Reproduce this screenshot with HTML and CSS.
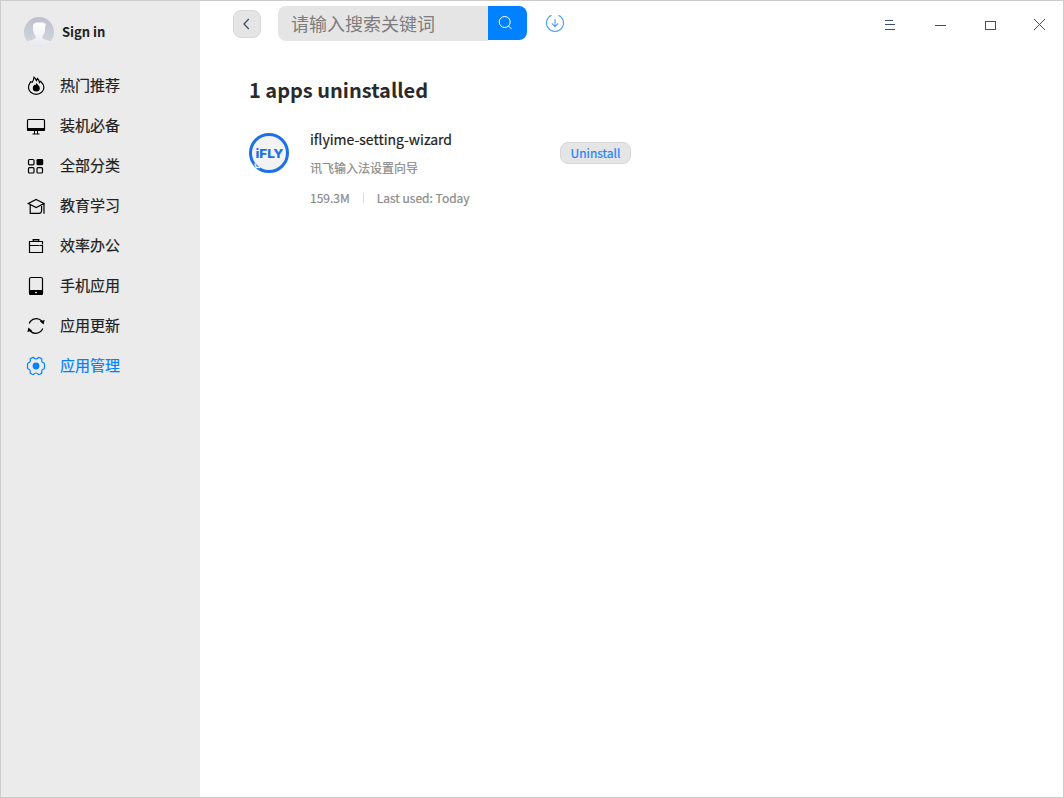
FILE: index.html
```html
<!DOCTYPE html>
<html lang="zh-CN">
<head>
<meta charset="utf-8">
<title>App Store</title>
<link rel="stylesheet" href="styles.css">
</head>
<body>
<div class="window">
  <aside class="sidebar">
    <div class="account">
      <svg class="avatar" viewBox="0 0 30 30">
        <defs>
          <linearGradient id="bg" x1="0" y1="0" x2="0" y2="1"><stop offset="0" stop-color="#bdc1cb"/><stop offset="1" stop-color="#d3d7df"/></linearGradient>
          <linearGradient id="fg" x1="0" y1="0" x2="0" y2="1"><stop offset="0" stop-color="#fff"/><stop offset="1" stop-color="#e6e9ef"/></linearGradient>
          <clipPath id="round"><circle cx="15" cy="15" r="15"/></clipPath>
        </defs>
        <g clip-path="url(#round)">
          <rect width="30" height="30" fill="url(#bg)"/>
          <path d="M9 8C10 6 12 5.500 14 5.500L20 5.500 19.500 6.500 22 6.500C21.500 8 21.500 9 21 11L21 14C20.500 16 19.500 18 18.500 19L18.500 21C20 23 26 23 29 26V30H1V26C4 23 10 23 11.500 21L11.500 19C10 17.500 9.500 15 9 13Z" fill="url(#fg)"/>
        </g>
      </svg>
      <span>Sign in</span>
    </div>
    <nav class="nav">
      <a class="item"><svg class="icon" viewBox="0 0 20 20"><path d="M6.200 6.200C7.400 5.100 7.800 3.500 8 1.300C9.500 2.300 10 3.300 10.400 4.500C11 3.800 11.300 3.300 11.500 2.500C12.800 3.500 13.200 4.800 13.500 6.500L14.600 5.300C16.500 7.100 17.900 8.800 17.900 11.500A7.700 6.800 0 0 1 2.500 11.500C2.500 8.800 3.700 7.500 4.600 5.700L6.200 6.200Z" class="line"/><path d="M10.400 6.700C11 8.500 13.800 9.600 13.800 12.200A3.500 3.300 0 0 1 6.800 12.200C6.800 10.500 7.700 9.900 8.300 8.800L9.100 9.200C9.800 8.500 10.200 7.800 10.400 6.700Z"/></svg><span>热门推荐</span></a>
      <a class="item"><svg class="icon" viewBox="0 0 20 20"><rect x="1.500" y="3.500" width="17" height="11" rx="1" class="line"/><path d="M1 12H19V14Q19 15 18 15H2Q1 15 1 14ZM8 15H9V17.500H8ZM11 15H12V17.500H11ZM6.500 17.500H13.500V18.500H6.500Z"/></svg><span>装机必备</span></a>
      <a class="item"><svg class="icon" viewBox="0 0 20 20"><g class="line"><rect x="2.500" y="3.500" width="5.500" height="5.300" rx="1"/><rect x="2.500" y="11.700" width="5.500" height="5.300" rx="1"/><rect x="11" y="11.700" width="5.500" height="5.300" rx="1"/></g><rect x="10.500" y="3" width="6.700" height="6.300" rx="1.300"/></svg><span>全部分类</span></a>
      <a class="item"><svg class="icon" viewBox="0 0 20 20"><path d="M10.200 3.500L18 7.500 10.200 11.500 2.300 7.500ZM4.200 9V17.300H13Q15.600 17.300 15.600 14.500V10M18 7.500V17.800" class="line"/></svg><span>教育学习</span></a>
      <a class="item"><svg class="icon" viewBox="0 0 20 20"><path d="M7.300 5.500V3.600H12.700V5.500M16.500 8.500V5.500H3.500V9.500H13.500M3.500 9.500V16.500H16.500V9.500" class="line"/><path d="M6.800 3H13.200V4.300H6.800ZM13.800 9H17V10H13.800Z"/></svg><span>效率办公</span></a>
      <a class="item"><svg class="icon" viewBox="0 0 20 20"><rect x="3.500" y="1.500" width="13" height="17" rx="1.500" class="line"/><path d="M3 14H17V17.500Q17 19 15.500 19H4.500Q3 19 3 17.500Z"/><rect x="9.200" y="15.800" width="1.600" height="1.400" fill="#fff"/></svg><span>手机应用</span></a>
      <a class="item"><svg class="icon" viewBox="0 0 20 20"><path d="M3.200 7.400A7.700 7.700 0 0 1 15.800 5M16.800 12.600A7.700 7.700 0 0 1 4.200 15" class="line"/><path d="M13.800 5.200L18.600 4 17.600 8.600ZM6.200 14.800L1.400 16 2.400 11.400Z"/></svg><span>应用更新</span></a>
      <a class="item active"><svg class="icon" viewBox="0 0 20 20"><path d="M6 1.700L7.500 1.500Q10 4.500 12.500 1.500L14 1.700 15.900 3.100Q14.900 6.500 18 7L18.500 8.300V11.700L18 13Q14.900 13.500 15.900 16.900L14 18.300 12.500 18.500Q10 15.500 7.500 18.500L6 18.300 4.100 16.900Q5.100 13.500 2 13L1.500 11.700V8.300L2 7Q5.100 6.500 4.100 3.100Z" class="line"/><circle cx="10" cy="10" r="3.400"/></svg><span>应用管理</span></a>
    </nav>
  </aside>
  <main class="main">
    <header class="toolbar">
      <button class="back"><svg viewBox="0 0 28 28"><path d="M15.800 9L11 14 15.800 19"/></svg></button>
      <div class="search">
        <div class="query">请输入搜索关键词</div>
        <button class="go"><svg viewBox="0 0 39 34"><circle cx="16.700" cy="16" r="5.500"/><path d="M20.500 20L23.500 23"/></svg></button>
      </div>
      <svg class="download" viewBox="0 0 20 20"><path d="M6.500 2.200A8.500 8.500 0 1 0 13.500 2.200M10 6V13.500M6.800 10.400L10 13.600 13.200 10.400"/></svg>
      <div class="controls">
        <svg viewBox="0 0 20 20"><path d="M5 5.500H13M5 9.500H15M5 14.500H15"/></svg>
        <svg viewBox="0 0 20 20"><path d="M5 10.500H16"/></svg>
        <svg viewBox="0 0 20 20"><rect x="5.500" y="6.500" width="10" height="8"/></svg>
        <svg viewBox="0 0 20 20"><path class="thin" d="M4 4L15 15M15 4L4 15"/></svg>
      </div>
    </header>
    <h1 class="title">1 apps uninstalled</h1>
    <section class="app">
      <svg class="logo" viewBox="0 0 40 40"><circle cx="20" cy="20" r="18.500" fill="#f3f3f4" stroke="#1b71e9" stroke-width="3"/><path d="M5.800 30.500L7.200 34.200 11 34.500" fill="none" stroke="#f3f3f4" stroke-width="1.500"/><text x="6.500" y="24.500" textLength="28" lengthAdjust="spacingAndGlyphs">iFLY</text></svg>
      <div class="info">
        <div class="name">iflyime-setting-wizard</div>
        <div class="desc">讯飞输入法设置向导</div>
        <div class="meta"><span>159.3M</span><i></i><span>Last used: Today</span></div>
      </div>
      <button class="uninstall">Uninstall</button>
    </section>
  </main>
</div>
</body>
</html>
```

FILE: styles.css
```css
* { box-sizing: border-box; }
body { margin: 0; background: #fff; font-family: "Noto Sans CJK SC", "Noto Sans", sans-serif; color: #222; }
button { border: 0; padding: 0; font: inherit; }
svg { display: block; flex: none; }
.window { display: flex; width: 1064px; height: 798px; border: 1px solid #ccc; }
.sidebar { width: 199px; background: #ebebeb; }
.account { display: flex; align-items: center; gap: 8px; height: 30px; margin: 16px 0 0 23px; font-size: 13px; font-weight: 700; }
.account span { padding-bottom: 2px; }
.avatar { width: 30px; height: 30px; }
.nav { margin-top: 18px; -webkit-text-stroke: .2px currentColor; }
.item { display: flex; align-items: center; gap: 14px; height: 40px; padding-left: 25px; font-size: 15px; line-height: 22px; }
.item span { padding-bottom: 1px; }
.icon { width: 20px; height: 20px; margin-top: 1px; fill: #000; }
.line { fill: none; stroke: #000; stroke-width: 1.2; }
.active { color: #0081ff; }
.active .icon { fill: #0081ff; }
.active .line { stroke: #0081ff; }
.main { flex: 1; }
.toolbar { display: flex; align-items: flex-start; height: 66px; padding: 5px 13px 0 33px; }
.back { width: 28px; height: 28px; margin-top: 4px; border: 1px solid #d8d8d8; border-radius: 8px; background: #e5e5e5; }
.back svg { width: 28px; height: 28px; margin: -1px; fill: none; stroke: #414d68; stroke-width: 1.3; }
.search { display: flex; width: 249px; margin-left: 17px; }
.query { width: 210px; height: 35px; padding-left: 13px; border-radius: 8px 0 0 8px; background: #e5e5e5; color: #7d7d7d; font-size: 18px; line-height: 35px; }
.go { width: 39px; height: 34px; border-radius: 0 8px 8px 0; background: #0081ff; }
.go svg { width: 39px; height: 34px; fill: none; stroke: #fff; stroke-width: 1; }
.download { width: 20px; height: 20px; margin: 7px 0 0 18px; fill: none; stroke: #4da0f5; stroke-width: 1.1; }
.controls { display: flex; gap: 30px; margin: 9px 0 0 auto; }
.controls svg { width: 20px; height: 20px; fill: none; stroke: #414d68; }
.controls .thin { stroke-width: 1; }
.title { margin: 0 0 0 49px; font-size: 20px; font-weight: 700; line-height: 46px; color: #2a2a2a; }
.app { display: flex; align-items: flex-start; margin: 15px 0 0 49px; }
.logo { width: 40px; height: 40px; margin-top: 5px; }
.logo text { fill: #1b71e9; font: 800 12.4px Inter, sans-serif; }
.info { width: 250px; margin-left: 21px; -webkit-text-stroke: .2px currentColor; }
.name { font-size: 14px; line-height: 22px; }
.desc { margin-top: 9px; color: #8a8a8a; font-size: 12px; line-height: 18px; }
.meta { display: flex; align-items: center; margin-top: 12px; color: #8a8a8a; font-size: 12px; line-height: 18px; }
.meta i { width: 1px; height: 10px; margin: 0 13px; background: #ddd; }
.uninstall { width: 71px; height: 22px; margin-top: 14px; border: 1px solid #d8d8d8; border-radius: 8px; background: #e5e5e5; color: #1a82ff; font-size: 12px; line-height: 20px; -webkit-text-stroke: .2px currentColor; }
```
